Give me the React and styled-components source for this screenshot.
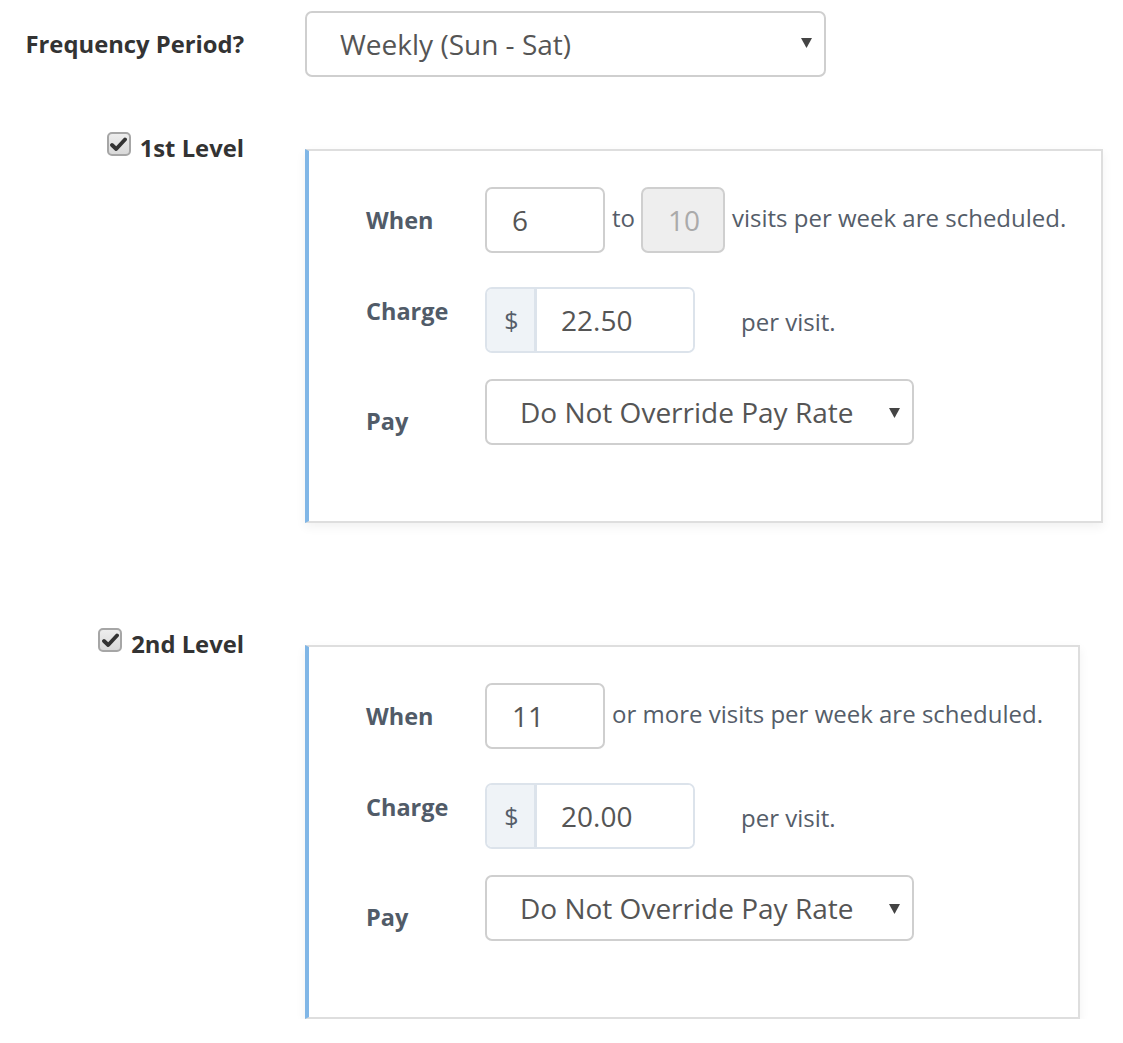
import React from "react";
import styled, { createGlobalStyle } from "styled-components";

const Global = createGlobalStyle`
  html, body { margin: 0; padding: 0; background: #fff; }
  body { font-family: "Open Sans", "Noto Sans", Arial, sans-serif; }
  * { box-sizing: border-box; }
`;

const Page = styled.div`
  padding-top: 11px;
  width: 1123px;
`;

const TopRow = styled.div`
  display: grid;
  grid-template-columns: 305px auto;
  align-items: center;
`;

const MainLabel = styled.div`
  justify-self: end;
  padding-right: 61px;
  font-size: 23.8px;
  font-weight: 700;
  color: #333;
  line-height: 30px;
  white-space: nowrap;
`;

const SelectBox = styled.div`
  position: relative;
  width: ${(p) => p.$w}px;
  height: 66px;
  border: 2px solid #cfcfcf;
  border-radius: 7px;
  background: #fff;
  display: flex;
  align-items: center;
  padding-left: 33px;
  font-size: 28px;
  color: #555;
  white-space: nowrap;
`;

const Caret = styled.svg`
  position: absolute;
  right: 12px;
  top: 50%;
  margin-top: ${(p) => p.$dy || -6}px;
  width: 11px;
  height: 11px;
`;

const LevelSection = styled.div`
  display: grid;
  grid-template-columns: 305px auto;
  align-items: start;
  margin-top: ${(p) => p.$mt}px;
`;

const LevelLabel = styled.label`
  justify-self: end;
  padding-right: 61px;
  display: flex;
  align-items: flex-start;
  gap: 9px;
  font-size: 23.8px;
  font-weight: 700;
  color: #333;
  line-height: 30px;
  white-space: nowrap;
`;

const Check = styled.span`
  width: 24px;
  height: 24px;
  margin-top: -1px;
  border: 2px solid #a6a6a6;
  border-radius: 5px;
  background: linear-gradient(#ededed, #d9d9d9);
  display: flex;
  align-items: center;
  justify-content: center;
  flex: none;
`;

const Panel = styled.div`
  justify-self: start;
  margin-top: 16px;
  border: 2px solid #dedede;
  border-left: 4px solid #80b6e6;
  box-shadow: 0 4px 10px rgba(0, 0, 0, 0.06);
  padding: 36px 35px 76px 57px;
  display: flex;
  flex-direction: column;
`;

const FieldRow = styled.div`
  display: grid;
  grid-template-columns: 119px auto;
  align-items: start;
  margin-bottom: ${(p) => p.$mb || 0}px;
`;

const FieldLabel = styled.div`
  margin-top: ${(p) => p.$mt}px;
  font-size: 23.5px;
  font-weight: 700;
  color: #515b68;
  line-height: 30px;
`;

const Inline = styled.div`
  display: flex;
  align-items: center;
  gap: ${(p) => p.$gap ?? 7}px;
  white-space: nowrap;
`;

const Input = styled.input`
  width: ${(p) => p.$w}px;
  height: 66px;
  border: 2px solid #cfcfcf;
  border-radius: 7px;
  padding: 0 0 0 25px;
  font-family: inherit;
  font-size: 28px;
  color: #555;
  background: #fff;
  outline: none;
  &:disabled {
    background: #eee;
    color: #aaa;
    -webkit-text-fill-color: #aaa;
    opacity: 1;
  }
`;

const Text = styled.span`
  font-size: 24px;
  color: #555d69;
  line-height: 30px;
  margin-top: -5px;
`;

const To = styled(Text)`
  margin-right: -1px;
`;

const Group = styled.div`
  display: flex;
  width: 210px;
  height: 66px;
  border: 2px solid #dce3eb;
  border-radius: 7px;
  overflow: hidden;
`;

const Addon = styled.span`
  width: 50px;
  background: #eff3f7;
  border-right: 3px solid #dce3eb;
  display: flex;
  align-items: center;
  justify-content: center;
  font-size: 25px;
  color: #555d69;
  padding-left: 2px;
`;

const GroupInput = styled.input`
  flex: 1;
  min-width: 0;
  border: none;
  padding-left: 24px;
  font-family: inherit;
  font-size: 28px;
  color: #555;
  outline: none;
  background: #fff;
`;

const Per = styled(Text)`
  margin-left: 46px;
  margin-top: 4px;
`;

const CaretIcon = ({ dy }) => (
  <Caret viewBox="0 0 10 10" $dy={dy}>
    <path d="M0 1 L10 1 L5 10 Z" fill="#444" />
  </Caret>
);

const CheckIcon = () => (
  <svg width="17" height="15" viewBox="0 0 17 15">
    <path
      d="M2 8 L6.2 12 L15 2.5"
      fill="none"
      stroke="#333"
      strokeWidth="3.8"
      strokeLinecap="round"
      strokeLinejoin="round"
    />
  </svg>
);

const Level = ({ title, mt, from, to, charge }) => (
  <LevelSection $mt={mt}>
    <LevelLabel>
      <Check>
        <CheckIcon />
      </Check>
      {title}
    </LevelLabel>
    <Panel>
      <FieldRow $mb={34}>
        <FieldLabel $mt={18}>When</FieldLabel>
        <Inline>
          <Input $w={120} defaultValue={from} readOnly />
          {to ? (
            <>
              <To>to</To>
              <Input $w={84} defaultValue={to} disabled />
              <Text>visits per week are scheduled.</Text>
            </>
          ) : (
            <Text>or more visits per week are scheduled.</Text>
          )}
        </Inline>
      </FieldRow>
      <FieldRow $mb={26}>
        <FieldLabel $mt={9}>Charge</FieldLabel>
        <Inline $gap={0}>
          <Group>
            <Addon>$</Addon>
            <GroupInput defaultValue={charge} readOnly />
          </Group>
          <Per>per visit.</Per>
        </Inline>
      </FieldRow>
      <FieldRow>
        <FieldLabel $mt={27}>Pay</FieldLabel>
        <SelectBox $w={429}>
          Do Not Override Pay Rate
          <CaretIcon dy={-5} />
        </SelectBox>
      </FieldRow>
    </Panel>
  </LevelSection>
);

export default function App() {
  return (
    <Page>
      <Global />
      <TopRow>
        <MainLabel>Frequency Period?</MainLabel>
        <SelectBox $w={521}>
          Weekly (Sun - Sat)
          <CaretIcon dy={-7} />
        </SelectBox>
      </TopRow>
      <Level title="1st Level" mt={56} from="6" to="10" charge="22.50" />
      <Level title="2nd Level" mt={106} from="11" charge="20.00" />
    </Page>
  );
}
